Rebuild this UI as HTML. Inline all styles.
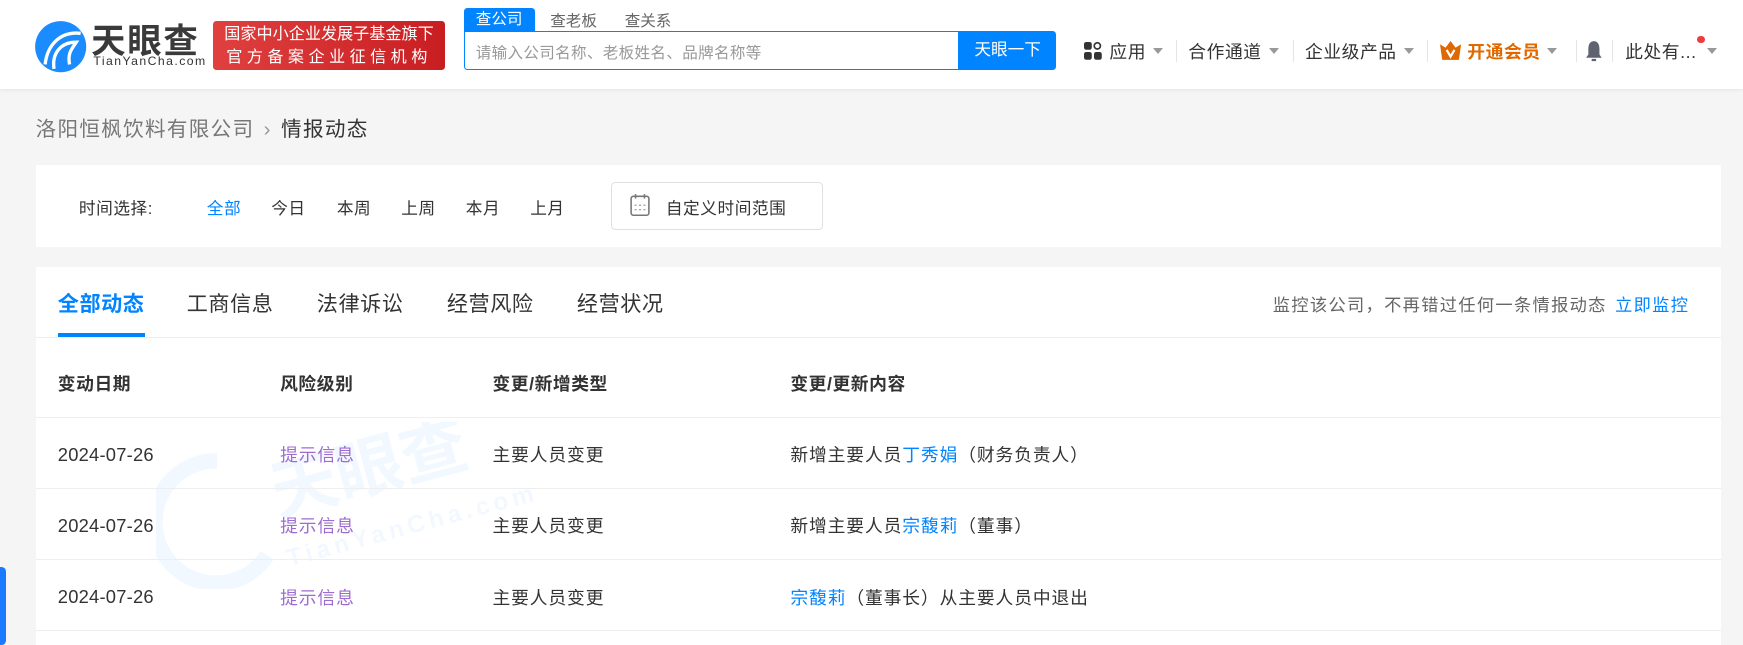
<!DOCTYPE html>
<html><head><meta charset="utf-8"><style>
html,body{margin:0;padding:0}
body{width:1568px;height:573px;overflow:hidden;background:#f5f5f5;font-family:"Liberation Sans","Noto Sans CJK SC",sans-serif;color:#333;position:relative;zoom:1.1116}
.a{position:absolute;white-space:nowrap}
.hdr{position:absolute;left:0;top:0;width:1568px;height:80px;background:#fff;box-shadow:0 1px 4px rgba(0,0,0,.08)}
.nav{font-size:16px;top:34px;color:#333;letter-spacing:.5px}
.arr{position:absolute;width:0;height:0;border-left:5px solid transparent;border-right:5px solid transparent;border-top:6px solid #999;top:43px}
.sep{position:absolute;width:1px;height:20px;background:#e5e5e5;top:36px}
.card{position:absolute;background:#fff;left:32px;width:1516px}
.t15{font-size:15px;top:175px;letter-spacing:.5px}
.tab{font-size:19px;top:259px;color:#333;letter-spacing:.5px}
.th{font-size:16px;font-weight:bold;top:333px;letter-spacing:.5px}
.td{font-size:16px;letter-spacing:.8px}
.dt{font-size:16.5px;letter-spacing:.2px}
.line{position:absolute;left:32px;width:1516px;height:1px;background:#eee}
.blue{color:#0084ff}
.pur{color:#9d6cd0}
</style></head><body>
<div class="hdr"></div>
<svg class="a" style="left:31px;top:18px" width="48" height="48" viewBox="0 0 48 48">
<circle cx="24" cy="24" r="23" fill="#1a8cff"/>
<path d="M10 40 C12 22 24 10 42 12" stroke="#fff" stroke-width="3" fill="none"/>
<path d="M18 44 C16 30 24 20 38 20 C34 26 30 30 32 40" stroke="#fff" stroke-width="3" fill="none"/>
</svg>
<div class="a" style="left:82px;top:12px;font-size:31px;font-weight:bold;color:#3a3a3a;letter-spacing:1.5px">天眼查</div>
<div class="a" style="left:84px;top:49px;font-size:11px;color:#333;letter-spacing:1.3px">TianYanCha.com</div>
<div class="a" style="left:192px;top:19px;width:208px;height:44px;border-radius:3px;background:linear-gradient(90deg,#e0403f,#c81e22);color:#fff;font-size:14.5px;line-height:20px;text-align:center;padding-top:2px;box-sizing:border-box">国家中小企业发展子基金旗下<br><span style="letter-spacing:4px">官方备案企业征信机构</span></div>
<div class="a" style="left:417px;top:7px;width:64px;height:21px;background:#0084ff;color:#fff;font-size:14px;text-align:center;line-height:21px;border-radius:3px 3px 0 0">查公司</div>
<div class="a" style="left:495px;top:8px;font-size:14px;color:#666">查老板</div>
<div class="a" style="left:562px;top:8px;font-size:14px;color:#666">查关系</div>
<div class="a" style="left:417px;top:28px;width:446px;height:35px;border:1px solid #0084ff;box-sizing:border-box;border-radius:0 0 0 3px;background:#fff"></div>
<div class="a" style="left:428px;top:37px;font-size:14px;color:#999;letter-spacing:.3px">请输入公司名称、老板姓名、品牌名称等</div>
<div class="a" style="left:863px;top:28px;width:87px;height:35px;background:#0084ff;color:#fff;font-size:15px;text-align:center;line-height:35px;border-radius:0 3px 3px 0">天眼一下</div>
<svg class="a" style="left:975px;top:38px" width="16" height="16"><rect x="0" y="0" width="7" height="7" rx="2" fill="#333"/><circle cx="12" cy="3.5" r="2.8" fill="none" stroke="#333" stroke-width="1.5"/><rect x="0" y="9" width="7" height="7" rx="2" fill="#333"/><rect x="9" y="9" width="7" height="7" rx="2" fill="#333"/></svg>
<div class="a nav" style="left:998px">应用</div><div class="arr" style="left:1037px"></div>
<div class="sep" style="left:1058px"></div>
<div class="a nav" style="left:1069px">合作通道</div><div class="arr" style="left:1142px"></div>
<div class="sep" style="left:1163px"></div>
<div class="a nav" style="left:1174px">企业级产品</div><div class="arr" style="left:1263px"></div>
<div class="sep" style="left:1284px"></div>
<svg class="a" style="left:1295px;top:37px" width="19" height="17" viewBox="0 0 19 17"><path d="M0 3 L5 6 L9.5 0 L14 6 L19 3 L17 17 L2 17 Z" fill="#e06800"/><path d="M6 8 L9.5 14 L13 8" stroke="#fff" stroke-width="2" fill="none"/></svg>
<div class="a nav" style="left:1320px;color:#e06800;font-weight:bold">开通会员</div><div class="arr" style="left:1392px"></div>
<div class="sep" style="left:1418px"></div>
<svg class="a" style="left:1426px;top:36px" width="16" height="20" viewBox="0 0 16 20"><path d="M8 1 C4 1 3 5 3 8 L3 13 L1 16 L15 16 L13 13 L13 8 C13 5 12 1 8 1Z" fill="#5f6370"/><rect x="6" y="17" width="4" height="2" fill="#5f6370"/></svg>
<div class="sep" style="left:1450px"></div>
<div class="a nav" style="left:1462px">此处有...</div>
<div class="a" style="left:1527px;top:32px;width:7px;height:7px;border-radius:50%;background:#f03c3c"></div>
<div class="arr" style="left:1536px"></div>

<div class="a" style="left:32px;top:101px;font-size:18.5px;color:#777;letter-spacing:1.2px">洛阳恒枫饮料有限公司 <span style="color:#999;margin:0 2px">›</span> <span style="color:#333">情报动态</span></div>

<div class="card" style="top:148px;height:74px"></div>
<div class="a t15" style="left:71px">时间选择:</div>
<div class="a t15 blue" style="left:186px">全部</div>
<div class="a t15" style="left:244px">今日</div>
<div class="a t15" style="left:303px">本周</div>
<div class="a t15" style="left:361px">上周</div>
<div class="a t15" style="left:419px">本月</div>
<div class="a t15" style="left:477px">上月</div>
<div class="a" style="left:550px;top:164px;width:190px;height:43px;border:1px solid #e0e0e0;border-radius:4px;box-sizing:border-box;background:#fff"></div>
<svg class="a" style="left:567px;top:174px" width="18" height="21" viewBox="0 0 18 21"><rect x="1" y="3" width="16" height="17" rx="2" fill="none" stroke="#777" stroke-width="1.4"/><line x1="5" y1="1" x2="5" y2="5" stroke="#777" stroke-width="1.4"/><line x1="13" y1="1" x2="13" y2="5" stroke="#777" stroke-width="1.4"/><path d="M4 11h2M8 11h2M12 11h2M4 15h2M8 15h2M12 15h2" stroke="#999" stroke-width="1"/></svg>
<div class="a t15" style="left:599px">自定义时间范围</div>

<div class="card" style="top:240px;height:340px"></div>
<div class="a tab blue" style="left:52px;font-weight:bold">全部动态</div>
<div class="a" style="left:52px;top:300px;width:78px;height:3px;background:#0084ff"></div>
<div class="a tab" style="left:168px">工商信息</div>
<div class="a tab" style="left:285px">法律诉讼</div>
<div class="a tab" style="left:402px">经营风险</div>
<div class="a tab" style="left:519px">经营状况</div>
<div class="a" style="left:1145px;top:262px;font-size:15.5px;color:#666;letter-spacing:1.2px">监控该公司，不再错过任何一条情报动态 <span class="blue" style="margin-left:2px">立即监控</span></div>
<div class="line" style="top:303px"></div>

<svg class="a" style="left:140px;top:380px;opacity:.05" width="360" height="150" viewBox="0 0 360 150"><path d="M55 35 A55 55 0 1 0 100 120" stroke="#1a8cff" stroke-width="14" fill="none"/><text x="110" y="85" font-size="60" font-weight="bold" fill="#1a8cff" font-family="Noto Sans CJK SC" transform="rotate(-15 110 85)">天眼查</text><text x="120" y="130" font-size="22" fill="#1a8cff" font-weight="bold" transform="rotate(-15 120 130)" letter-spacing="4">TianYanCha.com</text></svg>

<div class="a th" style="left:52px">变动日期</div>
<div class="a th" style="left:252px">风险级别</div>
<div class="a th" style="left:443px">变更/新增类型</div>
<div class="a th" style="left:711px">变更/更新内容</div>
<div class="line" style="top:375px"></div>

<div class="a dt" style="left:52px;top:399px">2024-07-26</div>
<div class="a td pur" style="left:252px;top:397px">提示信息</div>
<div class="a td" style="left:443px;top:397px">主要人员变更</div>
<div class="a td" style="left:711px;top:397px">新增主要人员<span class="blue">丁秀娟</span>（财务负责人）</div>
<div class="line" style="top:439px"></div>

<div class="a dt" style="left:52px;top:463px">2024-07-26</div>
<div class="a td pur" style="left:252px;top:461px">提示信息</div>
<div class="a td" style="left:443px;top:461px">主要人员变更</div>
<div class="a td" style="left:711px;top:461px">新增主要人员<span class="blue">宗馥莉</span>（董事）</div>
<div class="line" style="top:503px"></div>

<div class="a dt" style="left:52px;top:527px">2024-07-26</div>
<div class="a td pur" style="left:252px;top:525px">提示信息</div>
<div class="a td" style="left:443px;top:525px">主要人员变更</div>
<div class="a td" style="left:711px;top:525px"><span class="blue">宗馥莉</span>（董事长）从主要人员中退出</div>
<div class="line" style="top:567px"></div>

<div class="a" style="left:0;top:510px;width:5px;height:70px;background:#1a7bff;border-radius:0 4px 4px 0"></div>
</body></html>
